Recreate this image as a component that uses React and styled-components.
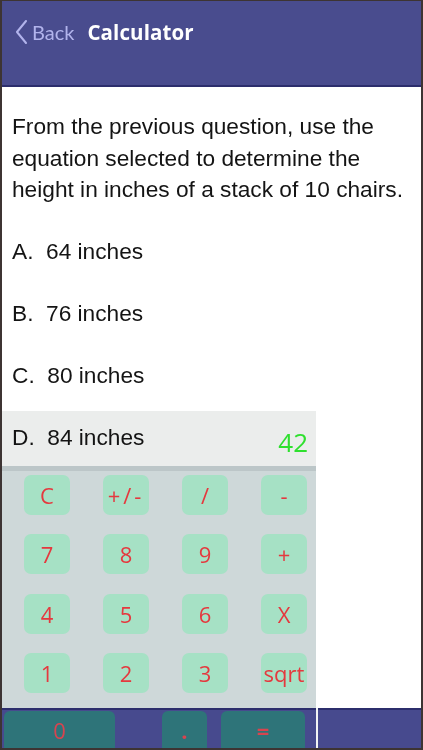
import React from "react";
import styled, { createGlobalStyle } from "styled-components";

const Global = createGlobalStyle`
  html, body { margin: 0; padding: 0; background: #3d3433; }
  * { box-sizing: border-box; }
`;

const Frame = styled.div`
  width: 423px;
  height: 750px;
  border-style: solid;
  border-color: #3d3433;
  border-width: 1px 2px 2px 2px;
  display: flex;
  flex-direction: column;
  background: #ffffff;
  overflow: hidden;
`;

const Header = styled.header`
  height: 86px;
  flex: none;
  background: #494c8e;
  border-bottom: 2px solid #2c2e6c;
  display: flex;
  align-items: flex-start;
  padding: 19px 0 0 13px;
`;

const BackButton = styled.div`
  display: flex;
  align-items: center;
  gap: 5px;
  color: #b2b4ec;
  font-family: Lato, "Open Sans", sans-serif;
  font-size: 20px;
  height: 24px;
`;

const Title = styled.h1`
  margin: 0 0 0 13px;
  height: 24px;
  display: flex;
  align-items: center;
  color: #ffffff;
  font-family: "Open Sans", "Liberation Sans", sans-serif;
  font-weight: 700;
  font-size: 20.5px;
  letter-spacing: 0.1px;
`;

const Body = styled.main`
  flex: 1;
  position: relative;
  background: #ffffff;
  font-family: "Liberation Sans", Arial, sans-serif;
  color: #141414;
`;

const Question = styled.p`
  margin: 0;
  padding: 24px 8px 0 10px;
  font-size: 22.7px;
  line-height: 31.5px;
  height: 133px;
`;

const Option = styled.div`
  height: 62px;
  line-height: 62px;
  padding-left: 10px;
  font-size: 22.7px;
  white-space: pre;
`;

const Calculator = styled.section`
  position: absolute;
  left: 0;
  bottom: 0;
  width: 314px;
  display: flex;
  flex-direction: column;
`;

const Display = styled.div`
  height: 55px;
  background: #ebedec;
  mix-blend-mode: multiply;
  display: flex;
  align-items: center;
  justify-content: flex-end;
  padding: 6px 8px 0 0;
  color: #2ee02e;
  font-family: "Open Sans", "Liberation Sans", sans-serif;
  font-size: 26px;
`;

const Keypad = styled.div`
  height: 242px;
  background: #ced8d9;
  border-top: 5px solid #bcc6c8;
  padding: 4px 0 0 22px;
  display: grid;
  grid-template-columns: repeat(4, 46px);
  grid-auto-rows: 40px;
  column-gap: 33px;
  row-gap: 19.3px;
`;

const Key = styled.button`
  border: none;
  padding: 0;
  margin: 0;
  background: #a6e1c5;
  border-radius: 7px;
  color: #e5383e;
  font-family: "Open Sans", "Liberation Sans", sans-serif;
  font-size: 22px;
  letter-spacing: ${(p) => (p.$spaced ? "3px" : "0")};
  display: flex;
  align-items: center;
  justify-content: center;
  white-space: nowrap;
`;

const BottomBar = styled.footer`
  height: 40px;
  flex: none;
  display: flex;
`;

const BarSection = styled.div`
  background: #474a8e;
  border-top: 2px solid #2c2e6c;
  display: flex;
  padding: 1px 0 0 2px;
  width: ${(p) => (p.$width ? `${p.$width}px` : "auto")};
  flex: ${(p) => (p.$width ? "none" : "1")};
`;

const BarDivider = styled.div`
  width: 2px;
  background: #f2f4f4;
`;

const BarKey = styled.button`
  border: none;
  padding: 0;
  margin: 0 0 0 ${(p) => p.$offset || 0}px;
  width: ${(p) => p.$width}px;
  height: 37px;
  background: #2e7479;
  border-radius: 6px 6px 0 0;
  color: #d8444f;
  font-family: "Open Sans", "Liberation Sans", sans-serif;
  font-size: 22px;
  font-weight: ${(p) => (p.$bold ? 700 : 400)};
  display: flex;
  align-items: center;
  justify-content: center;
`;

const keys = ["C", "+/-", "/", "-", "7", "8", "9", "+", "4", "5", "6", "X", "1", "2", "3", "sqrt"];

export default function App() {
  return (
    <>
      <Global />
      <Frame>
        <Header>
          <BackButton>
            <svg width="12" height="24" viewBox="0 0 12 24" fill="none">
              <path d="M11 1 L2 12 L11 23" stroke="#b2b4ec" strokeWidth="2" strokeLinecap="round" strokeLinejoin="round" />
            </svg>
            Back
          </BackButton>
          <Title>Calculator</Title>
        </Header>
        <Body>
          <Question>
            From the previous question, use the equation selected to determine the height in inches of a stack of 10 chairs.
          </Question>
          <Option>A.  64 inches</Option>
          <Option>B.  76 inches</Option>
          <Option>C.  80 inches</Option>
          <Option>D.  84 inches</Option>
          <Calculator>
            <Display>42</Display>
            <Keypad>
              {keys.map((k) => (
                <Key key={k} $spaced={k === "+/-"}>{k}</Key>
              ))}
            </Keypad>
          </Calculator>
        </Body>
        <BottomBar>
          <BarSection $width={314}>
            <BarKey $width={111}>0</BarKey>
            <BarKey $width={45} $offset={47} $bold>.</BarKey>
            <BarKey $width={84} $offset={14} $bold>=</BarKey>
          </BarSection>
          <BarDivider />
          <BarSection />
        </BottomBar>
      </Frame>
    </>
  );
}
